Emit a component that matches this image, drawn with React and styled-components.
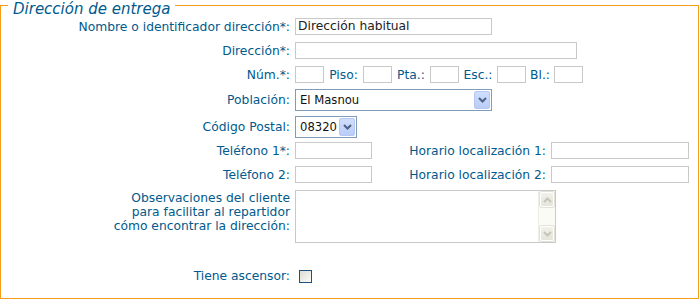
import React from "react";
import styled, { createGlobalStyle } from "styled-components";

const Global = createGlobalStyle`
  html, body { margin: 0; padding: 0; background: #fff; }
  body { font-family: "DejaVu Sans", Verdana, sans-serif; font-size: 12.3px; color: #005a8c; }
`;

const Fieldset = styled.fieldset`
  box-sizing: border-box;
  width: 699px;
  height: 299px;
  margin: 0;
  padding: 0;
  border: 1px solid #f59d1a;
`;

const Legend = styled.legend`
  margin-left: 7px;
  padding: 0 5px;
  height: 11px;
  font-size: 15px;
  font-style: italic;
  line-height: 18px;
  color: #005a8c;
  overflow: visible;
`;

const Form = styled.div`
  display: flex;
  flex-direction: column;
  padding-top: 7px;
`;

const Row = styled.div`
  display: grid;
  grid-template-columns: 289px auto;
  column-gap: 5px;
  align-items: ${(p) => (p.$top ? "start" : "center")};
  height: ${(p) => p.$h}px;
  margin-top: ${(p) => p.$mt}px;
`;

const Label = styled.label`
  text-align: right;
  white-space: nowrap;
  line-height: 14px;
  padding-top: ${(p) => (p.$multi ? "1px" : "0")};
`;

const Controls = styled.div`
  display: flex;
  align-items: center;
`;

const Input = styled.div`
  box-sizing: border-box;
  width: ${(p) => p.$w}px;
  height: 17px;
  border: 1px solid #c9c9c9;
  background: #fff;
  color: #222;
  line-height: 15px;
  padding-left: 2px;
  white-space: nowrap;
  overflow: hidden;
`;

const SmallLabel = styled.span`
  width: ${(p) => p.$w}px;
  text-align: center;
  white-space: nowrap;
`;

const SideLabel = styled.span`
  width: ${(p) => p.$w}px;
  padding-right: 5px;
  text-align: right;
  white-space: nowrap;
`;

const SelectBox = styled.div`
  box-sizing: border-box;
  width: ${(p) => p.$w}px;
  height: 22px;
  border: 1px solid #7f9db9;
  background: #fff;
  display: flex;
  align-items: center;
  justify-content: space-between;
  padding: 0 1px 0 4px;
  color: #111;
  font-size: 11.6px;
`;

const SelectButton = styled.span`
  box-sizing: border-box;
  width: 16px;
  height: 18px;
  border: 1px solid #b5c8f2;
  border-radius: 2px;
  background: linear-gradient(#d0defd, #b9cdf8);
  display: flex;
  align-items: center;
  justify-content: center;
`;

const TextAreaBox = styled.div`
  box-sizing: border-box;
  width: 261px;
  height: 53px;
  border: 1px solid #c9c9c9;
  background: #fff;
  display: flex;
  justify-content: flex-end;
`;

const ScrollBar = styled.div`
  width: 17px;
  background: #fbfbf6;
  border-left: 1px solid #eeede5;
  display: flex;
  flex-direction: column;
  justify-content: space-between;
  box-sizing: border-box;
  padding: 1px 1px;
`;

const ScrollBtn = styled.span`
  box-sizing: border-box;
  height: 15px;
  border: 1px solid #fff;
  border-radius: 2px;
  background: linear-gradient(#f1f0e9, #e6e5dc);
  box-shadow: 0 0 0 1px #e2e1d8;
  display: flex;
  align-items: center;
  justify-content: center;
`;

const Check = styled.span`
  box-sizing: border-box;
  width: 13px;
  height: 13px;
  margin-left: 4px;
  border: 1px solid #1c5180;
  background: linear-gradient(135deg, #dcdcd5, #fbfbf9);
`;

const Chevron = ({ up, color, w = 2 }) => (
  <svg width="9" height="6" viewBox="0 0 9 6">
    <polyline
      points={up ? "1,5 4.5,1.5 8,5" : "1,1 4.5,4.5 8,1"}
      fill="none"
      stroke={color}
      strokeWidth={w}
    />
  </svg>
);

const Select = ({ w, value }) => (
  <SelectBox $w={w}>
    <span>{value}</span>
    <SelectButton>
      <Chevron color="#4d6185" />
    </SelectButton>
  </SelectBox>
);

export default function App() {
  return (
    <>
      <Global />
      <Fieldset>
        <Legend>Dirección de entrega</Legend>
        <Form>
          <Row $h={17} $mt={0}>
            <Label>Nombre o identificador dirección*:</Label>
            <Controls>
              <Input $w={197}>Dirección habitual</Input>
            </Controls>
          </Row>
          <Row $h={17} $mt={7}>
            <Label>Dirección*:</Label>
            <Controls>
              <Input $w={282} />
            </Controls>
          </Row>
          <Row $h={17} $mt={7}>
            <Label>Núm.*:</Label>
            <Controls>
              <Input $w={29} />
              <SmallLabel $w={39}>Piso:</SmallLabel>
              <Input $w={29} />
              <SmallLabel $w={38}>Pta.:</SmallLabel>
              <Input $w={29} />
              <SmallLabel $w={38}>Esc.:</SmallLabel>
              <Input $w={29} />
              <SmallLabel $w={28}>Bl.:</SmallLabel>
              <Input $w={29} />
            </Controls>
          </Row>
          <Row $h={22} $mt={6}>
            <Label>Población:</Label>
            <Controls>
              <Select w={197} value="El Masnou" />
            </Controls>
          </Row>
          <Row $h={22} $mt={5}>
            <Label>Código Postal:</Label>
            <Controls>
              <Select w={62} value="08320" />
            </Controls>
          </Row>
          <Row $h={17} $mt={4}>
            <Label>Teléfono 1*:</Label>
            <Controls>
              <Input $w={77} />
              <SideLabel $w={174}>Horario localización 1:</SideLabel>
              <Input $w={138} />
            </Controls>
          </Row>
          <Row $h={17} $mt={7}>
            <Label>Teléfono 2:</Label>
            <Controls>
              <Input $w={77} />
              <SideLabel $w={174}>Horario localización 2:</SideLabel>
              <Input $w={138} />
            </Controls>
          </Row>
          <Row $h={53} $mt={7} $top>
            <Label $multi>
              Observaciones del cliente
              <br />
              para facilitar al repartidor
              <br />
              cómo encontrar la dirección:
            </Label>
            <Controls>
              <TextAreaBox>
                <ScrollBar>
                  <ScrollBtn>
                    <Chevron up color="#c6c5bc" />
                  </ScrollBtn>
                  <ScrollBtn>
                    <Chevron color="#c6c5bc" />
                  </ScrollBtn>
                </ScrollBar>
              </TextAreaBox>
            </Controls>
          </Row>
          <Row $h={13} $mt={26}>
            <Label>Tiene ascensor:</Label>
            <Controls>
              <Check />
            </Controls>
          </Row>
        </Form>
      </Fieldset>
    </>
  );
}
